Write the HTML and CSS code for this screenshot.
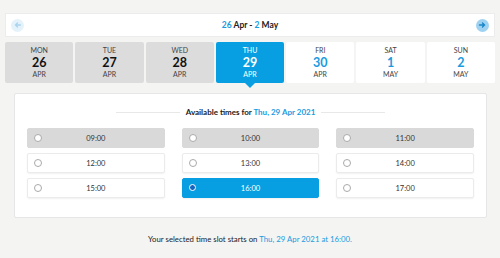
FILE: index.html
```html
<!DOCTYPE html>
<html lang="en">
<head>
  <meta charset="UTF-8" />
  <title>Book a time slot</title>
  <link rel="stylesheet" href="styles.css">
</head>
<body>
  <div class="page">
    <div class="week-bar">
      <button class="arrow prev">
        <svg width="12" height="12" viewBox="0 0 12 12"><path d="M8.5 6H3.5M5.5 4L3.5 6L5.5 8" stroke="#a9d4ee" stroke-width="1.3" fill="none" stroke-linecap="round"/></svg>
      </button>
      <div class="week-title"><span class="hl">26</span> Apr - <span class="hl">2</span> May</div>
      <button class="arrow next">
        <svg width="12" height="12" viewBox="0 0 12 12"><path d="M3.5 6H8.5M6.5 4L8.5 6L6.5 8" stroke="#1a86c8" stroke-width="1.4" fill="none" stroke-linecap="round"/></svg>
      </button>
    </div>

    <div class="days">
      <div class="day past"><span class="dname">MON</span><span class="dnum">26</span><span class="dmon">APR</span></div>
      <div class="day past"><span class="dname">TUE</span><span class="dnum">27</span><span class="dmon">APR</span></div>
      <div class="day past"><span class="dname">WED</span><span class="dnum">28</span><span class="dmon">APR</span></div>
      <div class="day active"><span class="dname">THU</span><span class="dnum">29</span><span class="dmon">APR</span></div>
      <div class="day"><span class="dname">FRI</span><span class="dnum">30</span><span class="dmon">APR</span></div>
      <div class="day"><span class="dname">SAT</span><span class="dnum">1</span><span class="dmon">MAY</span></div>
      <div class="day"><span class="dname">SUN</span><span class="dnum">2</span><span class="dmon">MAY</span></div>
    </div>

    <div class="panel">
      <div class="panel-title">
        <span class="line"></span>
        <span>Available times for <span class="hl">Thu, 29 Apr 2021</span></span>
        <span class="line"></span>
      </div>
      <div class="slots">
        <div class="slot off"><span class="radio"></span>09:00</div>
        <div class="slot off"><span class="radio"></span>10:00</div>
        <div class="slot off"><span class="radio"></span>11:00</div>
        <div class="slot"><span class="radio"></span>12:00</div>
        <div class="slot"><span class="radio"></span>13:00</div>
        <div class="slot"><span class="radio"></span>14:00</div>
        <div class="slot"><span class="radio"></span>15:00</div>
        <div class="slot picked"><span class="radio"></span>16:00</div>
        <div class="slot"><span class="radio"></span>17:00</div>
      </div>
    </div>

    <p class="summary">Your selected time slot starts on <span class="hl">Thu, 29 Apr 2021 at 16:00.</span></p>
  </div>
</body>
</html>
```

FILE: styles.css
```css
body {
  margin: 0;
  font-family: Lato, "Noto Sans", sans-serif;
  background: #f4f4f3;
  color: #333;
}

.page {
  padding: 13px 5px 0 5px;
}

.hl {
  color: #1a9be0;
}

.week-bar {
  display: flex;
  align-items: center;
  justify-content: space-between;
  height: 22px;
  padding: 0 5px;
  background: #fff;
  border: 1px solid #ececec;
}

.arrow {
  width: 13px;
  height: 13px;
  padding: 0;
  border: none;
  border-radius: 50%;
  display: flex;
  align-items: center;
  justify-content: center;
  cursor: pointer;
}

.arrow.prev { background: #e4f2fb; }
.arrow.next { background: #9fd2f1; }

.week-title {
  font-size: 8.5px;
  font-weight: bold;
  color: #222;
}

.days {
  display: grid;
  grid-template-columns: repeat(7, 1fr);
  gap: 2px;
  margin-top: 5px;
}

.day {
  position: relative;
  height: 41px;
  display: flex;
  flex-direction: column;
  align-items: center;
  justify-content: center;
  background: #fff;
  border-radius: 2px;
  color: #444;
}

.day.past { background: #dcdcdc; }

.day.active {
  background: #079fe2;
  color: #fff;
}

.day.active::after {
  content: "";
  position: absolute;
  left: 50%;
  bottom: -5px;
  margin-left: -5px;
  border-left: 5px solid transparent;
  border-right: 5px solid transparent;
  border-top: 5px solid #079fe2;
}

.dname, .dmon {
  font-size: 7px;
  line-height: 9px;
}

.dnum {
  font-size: 12.5px;
  font-weight: bold;
  line-height: 15px;
  color: #111;
}

.day.active .dnum { color: #fff; }
.day:nth-child(n+5) .dnum { color: #1a9be0; }

.panel {
  margin: 10px 8px 0 9px;
  padding: 10px 12px 19px 12px;
  background: #fff;
  border: 1px solid #e6e6e6;
  border-radius: 2px;
}

.panel-title {
  display: flex;
  align-items: center;
  justify-content: center;
  gap: 6px;
  font-size: 8px;
  font-weight: bold;
  color: #222;
  height: 16px;
}

.panel-title .line {
  width: 64px;
  height: 1px;
  background: #e8e8e8;
}

.slots {
  display: grid;
  grid-template-columns: repeat(3, 1fr);
  column-gap: 17px;
  row-gap: 5px;
  margin-top: 8px;
}

.slot {
  position: relative;
  box-sizing: border-box;
  height: 20px;
  display: flex;
  align-items: center;
  justify-content: center;
  font-size: 7.5px;
  color: #333;
  background: #fff;
  border: 1px solid #ebebeb;
  border-radius: 2px;
  box-shadow: 0 1px 2px rgba(0,0,0,0.06);
}

.slot.off {
  background: #d9d9d9;
  border-color: #d9d9d9;
  box-shadow: none;
}

.slot.picked {
  background: #079fe2;
  border-color: #079fe2;
  color: #fff;
}

.radio {
  position: absolute;
  left: 6px;
  top: 50%;
  width: 6px;
  height: 6px;
  margin-top: -4px;
  border: 1px solid #aaa;
  border-radius: 50%;
  background: #fff;
}

.slot.picked .radio {
  border: 1.5px solid #fff;
  background: #1565c0;
  width: 5px;
  height: 5px;
}

.summary {
  margin: 16px 0 0 0;
  text-align: center;
  font-size: 7.8px;
  color: #222;
}
```
